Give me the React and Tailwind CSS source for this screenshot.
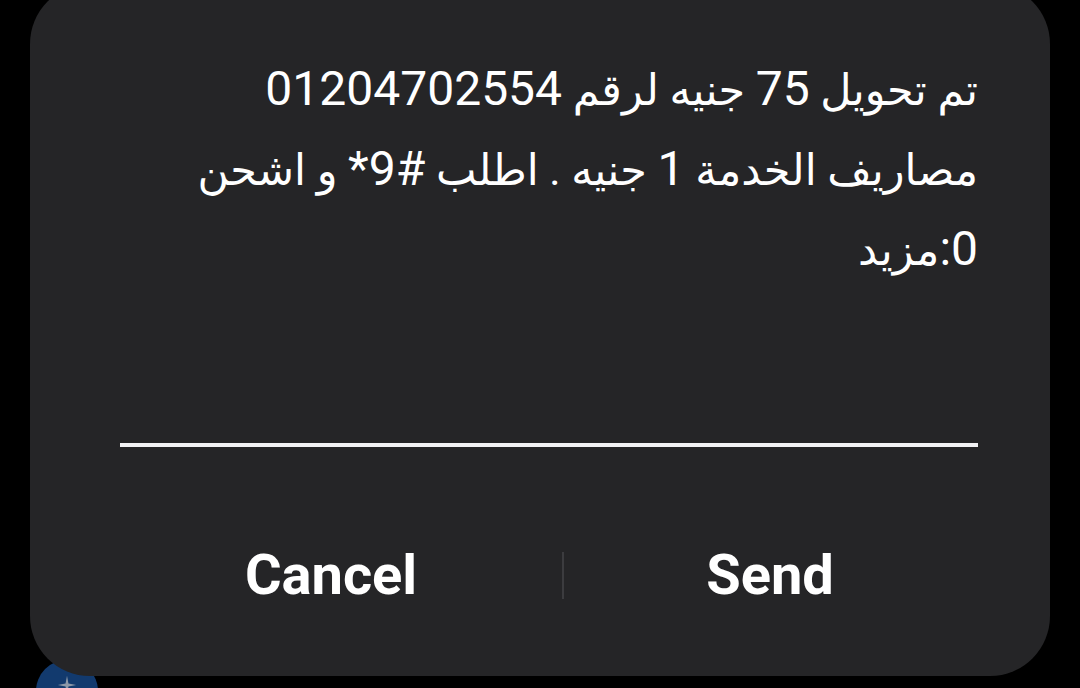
import React from "react";

const bodyFont = { fontFamily: 'Roboto, "DejaVu Sans", sans-serif' };

// Arabic runs in DejaVu come out wider than the phone font, so digits get their own size
const N = ({ children }) => <span className="text-[48px]">{children}</span>;

export default function App() {
  return (
    <div className="relative h-[688px] w-[1080px] overflow-hidden bg-black px-[30px]">
      {/* avatar peeking out behind the dialog */}
      <div className="absolute left-[36px] top-[660px] flex h-[62px] w-[62px] items-start justify-center rounded-full bg-[#123a6e] pt-[14px]">
        <svg width="22" height="22" viewBox="0 0 24 24" fill="#8c98a8">
          <path d="M12 2 L13.6 10.4 L22 12 L13.6 13.6 L12 22 L10.4 13.6 L2 12 L10.4 10.4 Z" />
        </svg>
      </div>

      <div className="relative z-10 -mt-[16px] flex h-[692px] flex-col rounded-[60px] bg-[#252527]">
        {/* message text */}
        <div
          dir="rtl"
          className="ml-[90px] mr-[72px] mt-[65px] text-[43px] leading-[80px] text-white"
          style={bodyFont}
        >
          <div className="h-[80px] whitespace-nowrap text-right">
            تم تحويل <N>75</N> جنيه لرقم <N>01204702554</N>
          </div>
          <div className="h-[80px] whitespace-nowrap text-right">
            مصاريف الخدمة <N>1</N> جنيه . اطلب <N>{"#\u200F9*"}</N> و اشحن
          </div>
          <div className="h-[80px] whitespace-nowrap text-right">
            <N>0:</N>مزيد
          </div>
        </div>

        {/* input underline */}
        <div className="ml-[90px] mr-[72px] mt-[154px] h-[4px] bg-[#f2f2f4]" />

        {/* buttons */}
        <div className="ml-[70px] mt-[78px] flex h-[100px] items-center">
          <button
            className="w-[462px] text-center text-[56px] font-bold text-white"
            style={{ fontFamily: "Roboto, sans-serif" }}
          >
            Cancel
          </button>
          <div className="h-[47px] w-[2px] bg-[#3c3c3f]" />
          <button
            className="w-[412px] text-center text-[56px] font-bold text-white"
            style={{ fontFamily: "Roboto, sans-serif" }}
          >
            Send
          </button>
        </div>
      </div>
    </div>
  );
}
